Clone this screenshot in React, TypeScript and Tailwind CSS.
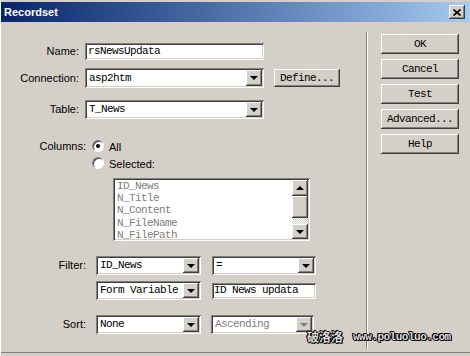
import React from "react";

const sunken =
  "shadow-[inset_1px_1px_0_#808080,inset_-1px_-1px_0_#ffffff,inset_2px_2px_0_#404040,inset_-2px_-2px_0_#d4d0c8]";
const raised =
  "shadow-[inset_-1px_-1px_0_#404040,inset_1px_1px_0_#ffffff,inset_-2px_-2px_0_#808080,inset_2px_2px_0_#d4d0c8]";
const sans = "font-['Liberation_Sans',Arial,sans-serif] text-[11px] text-black";
const mono = "font-['Liberation_Mono','Courier_New',monospace] text-[11px] tracking-[-0.6px]";

const Arrow = ({ up = false, disabled = false }: { up?: boolean; disabled?: boolean }) => (
  <div
    className={`w-0 h-0 border-x-[4px] border-x-transparent ${
      up
        ? "border-b-[4px] border-b-black"
        : disabled
        ? "border-t-[4px] border-t-[#808080]"
        : "border-t-[4px] border-t-black"
    }`}
  />
);

const SelectBox = ({
  value,
  width,
  disabled = false,
}: {
  value: string;
  width: string;
  disabled?: boolean;
}) => (
  <div className={`${width} h-full flex items-stretch bg-white p-[2px] ${sunken}`}>
    <div
      className={`flex-1 flex items-center pl-[2px] ${mono} ${
        disabled ? "text-[#808080]" : "text-black"
      }`}
    >
      {value}
    </div>
    <div className={`w-[16px] flex items-center justify-center bg-[#d4d0c8] ${raised}`}>
      <Arrow disabled={disabled} />
    </div>
  </div>
);

const Radio = ({ checked }: { checked?: boolean }) => (
  <div className="w-[12px] h-[12px] rounded-full bg-white border border-[#808080] border-b-white border-r-white shadow-[inset_1px_1px_0_#404040] flex items-center justify-center">
    {checked && <div className="w-[4px] h-[4px] rounded-full bg-black" />}
  </div>
);

const Button = ({ label, className = "" }: { label: string; className?: string }) => (
  <div
    className={`flex items-center justify-center bg-[#d4d0c8] text-black ${mono} ${raised} ${className}`}
  >
    {label}
  </div>
);

const columns = ["ID_News", "N_Title", "N_Content", "N_FileName", "N_FilePath"];

export default function App() {
  return (
    <div className="w-[470px] h-[356px] bg-[#d4d0c8] relative overflow-hidden flex flex-col border-l border-white">
      {/* title bar */}
      <div className="mt-[2px] h-[20px] flex items-center justify-between bg-gradient-to-r from-[#0a246a] to-[#a6caf0]">
        <span className="pl-[3px] font-['Liberation_Sans',Arial,sans-serif] text-[11px] font-bold text-white">
          Recordset
        </span>
        <div className={`mr-[5px] w-[16px] h-[14px] bg-[#d4d0c8] flex items-center justify-center ${raised}`}>
          <svg width="8" height="7" viewBox="0 0 8 7">
            <path d="M0.5 0.5 L7.5 6.5 M7.5 0.5 L0.5 6.5" stroke="#000" strokeWidth="1.7" />
          </svg>
        </div>
      </div>

      <div className="h-[331px] flex border-b border-[#808080]">
        {/* left side */}
        <div className="w-[365px] flex flex-col">
          <div className="mt-[21px] h-[17px] flex items-center">
            <span className={`w-[78px] text-right ${sans}`}>Name:</span>
            <div className={`ml-[6px] w-[179px] h-full bg-white flex items-center pl-[3px] ${mono} ${sunken}`}>
              rsNewsUpdata
            </div>
          </div>

          <div className="mt-[8px] h-[20px] flex items-center">
            <span className={`w-[78px] text-right ${sans}`}>Connection:</span>
            <div className="ml-[6px] h-full">
              <SelectBox value="asp2htm" width="w-[179px]" />
            </div>
            <Button label="Define..." className="ml-[10px] w-[66px] h-[18px]" />
          </div>

          <div className="mt-[12px] h-[19px] flex items-center">
            <span className={`w-[78px] text-right ${sans}`}>Table:</span>
            <div className="ml-[6px] h-full">
              <SelectBox value="T_News" width="w-[179px]" />
            </div>
          </div>

          <div className="mt-[21px] h-[12px] flex items-center">
            <span className={`w-[85px] text-right ${sans}`}>Columns:</span>
            <div className="ml-[6px]">
              <Radio checked />
            </div>
            <span className={`ml-[5px] mt-[2px] ${sans}`}>All</span>
          </div>
          <div className="mt-[5px] h-[12px] flex items-center">
            <div className="ml-[91px]">
              <Radio />
            </div>
            <span className={`ml-[5px] mt-[2px] ${sans}`}>Selected:</span>
          </div>

          {/* column list */}
          <div className={`mt-[9px] ml-[112px] w-[197px] h-[63px] bg-white p-[2px] flex ${sunken}`}>
            <div className={`flex-1 pl-[2px] leading-[12.2px] text-[#808080] ${mono}`}>
              {columns.map((c) => (
                <div key={c}>{c}</div>
              ))}
            </div>
            <div className="w-[16px] flex flex-col">
              <div className={`h-[16px] flex items-center justify-center bg-[#d4d0c8] ${raised}`}>
                <Arrow up />
              </div>
              <div className={`h-[22px] bg-[#d4d0c8] ${raised}`} />
              <div className="flex-1 bg-[image:repeating-conic-gradient(#ffffff_0_25%,#d4d0c8_0_50%)] bg-[length:2px_2px]" />
              <div className={`h-[15px] flex items-center justify-center bg-[#d4d0c8] ${raised}`}>
                <Arrow />
              </div>
            </div>
          </div>

          {/* filter */}
          <div className="mt-[15px] h-[19px] flex items-center">
            <span className={`w-[85px] text-right ${sans}`}>Filter:</span>
            <div className="ml-[10px] h-full">
              <SelectBox value="ID_News" width="w-[105px]" />
            </div>
            <div className="ml-[11px] h-full">
              <SelectBox value="=" width="w-[104px]" />
            </div>
          </div>
          <div className="mt-[6px] h-[19px] flex items-center">
            <div className="w-[85px]" />
            <div className="ml-[10px] h-full">
              <SelectBox value="Form Variable" width="w-[105px]" />
            </div>
            <div className={`ml-[11px] w-[104px] h-[16px] bg-white flex items-center pl-[2px] ${mono} ${sunken}`}>
              ID News updata
            </div>
          </div>

          {/* sort */}
          <div className="mt-[15px] h-[19px] flex items-center">
            <span className={`w-[85px] text-right ${sans}`}>Sort:</span>
            <div className="ml-[10px] h-full">
              <SelectBox value="None" width="w-[105px]" />
            </div>
            <div className="ml-[10px] h-full">
              <SelectBox value="Ascending" width="w-[103px]" disabled />
            </div>
          </div>
        </div>

        {/* separator */}
        <div className="mt-[10px] mb-[3px] w-[2px] border-l border-[#808080] bg-white" />

        {/* buttons */}
        <div className="pl-[13px] pt-[12px] flex flex-col gap-[5px]">
          {["OK", "Cancel", "Test", "Advanced...", "Help"].map((b) => (
            <Button key={b} label={b} className="w-[78px] h-[20px]" />
          ))}
        </div>
      </div>

      {/* watermark */}
      <div className="absolute left-[306px] top-[328px] flex items-center gap-[10px] [text-shadow:1px_0_0_#000,-1px_0_0_#000,0_1px_0_#000,0_-1px_0_#000,1px_1px_0_#000,-1px_-1px_0_#000]">
        <span className="font-['Noto_Sans_CJK_SC',sans-serif] text-[12px] font-bold text-[#dcdcdc]">
          破洛洛
        </span>
        <span className="font-['Liberation_Mono',monospace] text-[11px] font-bold tracking-[-0.5px] text-[#dcdcdc]">
          www.poluoluo.com
        </span>
      </div>
    </div>
  );
}
